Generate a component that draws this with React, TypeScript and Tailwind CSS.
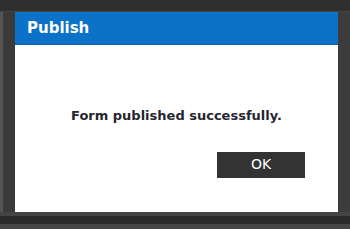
export default function App() {
  return (
    <div className="w-[350px] h-[229px] bg-[#3a3a3a] flex flex-col" style={{ fontFamily: '"DejaVu Sans", Verdana, sans-serif' }}>
      <div className="h-[12px] bg-[#2e2e2e] border-b border-[#444]" />
      <div className="flex flex-1">
        <div className="w-[15px] bg-[#3a3a3a] border-l-[3px] border-[#555]" />
        <div className="w-[323px] h-[200px] bg-white flex flex-col">
          <div className="h-[33px] bg-[#0b72c7] flex items-center pl-[12px] border-b border-[#1a5fa0]">
            <span className="text-white font-bold text-[15px]">Publish</span>
          </div>
          <div className="flex-1 flex flex-col items-center">
            <div className="mt-[61px] text-[#262630] font-bold text-[13px]">Form published successfully.</div>
            <div className="self-end mr-[33px] mt-[26px] w-[88px] h-[26px] bg-[#333333] text-white text-[14px] flex items-center justify-center">OK</div>
          </div>
        </div>
        <div className="flex-1 bg-[#3c3c3c]" />
      </div>
      <div className="h-[4px] bg-[#444]" />
      <div className="h-[8px] bg-[#2a2a2a]" />
      <div className="h-[5px] bg-[#454545]" />
    </div>
  );
}
